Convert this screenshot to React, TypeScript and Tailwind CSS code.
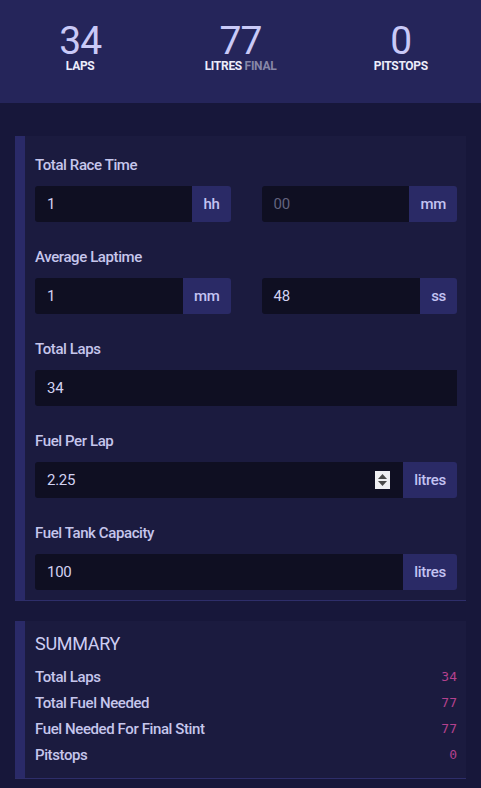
import React from 'react';

const font = { fontFamily: 'Roboto, "Noto Sans", sans-serif' };

const Stat = ({ value, label, extra }: { value: string; label: string; extra?: string }) => (
  <div className="flex flex-col items-center">
    <div className="text-[39px] leading-[36px] font-normal tracking-[-1px] text-[#c9c9f7]">{value}</div>
    <div className="text-[12px] leading-[14px] font-bold uppercase text-[#ececfa] tracking-[-0.3px]">
      {label}
      {extra && <span className="font-bold text-[#8787a8]"> {extra}</span>}
    </div>
  </div>
);

const Field = ({
  value,
  placeholder,
  unit,
  spinner,
}: {
  value?: string;
  placeholder?: string;
  unit?: string;
  spinner?: boolean;
}) => (
  <div className="flex h-[36px]">
    <div className="flex flex-1 items-center rounded-l-[3px] bg-[#0f0f22] pl-[12px] pr-[13px] text-[15px] tracking-[-0.3px]">
      {value ? (
        <span className="text-[#d2d2f2]">{value}</span>
      ) : (
        <span className="text-[#63637f]">{placeholder}</span>
      )}
      {spinner && (
        <span className="ml-auto flex h-[18px] w-[15px] flex-col items-center justify-center gap-[2px] bg-[#efeff2]">
          <svg width="9" height="5" viewBox="0 0 9 5">
            <path d="M0 5 L4.5 0 L9 5 Z" fill="#4a4a4a" />
          </svg>
          <svg width="9" height="5" viewBox="0 0 9 5">
            <path d="M0 0 L4.5 5 L9 0 Z" fill="#4a4a4a" />
          </svg>
        </span>
      )}
    </div>
    {unit && (
      <div className="flex items-center rounded-r-[3px] bg-[#2a2a66] px-[11px] text-[15px] font-medium tracking-[-0.3px] text-[#c3c3f2]">
        {unit}
      </div>
    )}
  </div>
);

const Label = ({ children }: { children: React.ReactNode }) => (
  <div className="mb-[10px] text-[15px] leading-[21px] font-medium tracking-[-0.4px] text-[#c6c6ec]">{children}</div>
);

const Card = ({ children, className }: { children: React.ReactNode; className?: string }) => (
  <div className={`mx-[15px] flex border-b border-[#2e2e6a] bg-[#1b1b3f] ${className ?? ''}`}>
    <div className="w-[10px] bg-[#2a2a68]" />
    <div className="flex-1 pl-[10px] pr-[9px]">{children}</div>
  </div>
);

const rows = [
  ['Total Laps', '34'],
  ['Total Fuel Needed', '77'],
  ['Fuel Needed For Final Stint', '77'],
  ['Pitstops', '0'],
];

export default function App() {
  return (
    <div className="min-h-[788px] bg-[#17173a] pb-[10px]" style={font}>
      <header className="grid h-[103px] grid-cols-3 bg-[#25255a] pt-[23px]">
        <Stat value="34" label="Laps" />
        <Stat value="77" label="Litres" extra="Final" />
        <Stat value="0" label="Pitstops" />
      </header>

      <Card className="mt-[33px]">
        <div className="pt-[19px] pb-[10px]">
          <Label>Total Race Time</Label>
          <div className="grid grid-cols-2 gap-[31px]">
            <Field value="1" unit="hh" />
            <Field placeholder="00" unit="mm" />
          </div>

          <div className="mt-[25px]">
            <Label>Average Laptime</Label>
            <div className="grid grid-cols-2 gap-[31px]">
              <Field value="1" unit="mm" />
              <Field value="48" unit="ss" />
            </div>
          </div>

          <div className="mt-[25px]">
            <Label>Total Laps</Label>
            <Field value="34" />
          </div>

          <div className="mt-[25px]">
            <Label>Fuel Per Lap</Label>
            <Field value="2.25" unit="litres" spinner />
          </div>

          <div className="mt-[25px]">
            <Label>Fuel Tank Capacity</Label>
            <Field value="100" unit="litres" />
          </div>
        </div>
      </Card>

      <Card className="mt-[20px]">
        <div className="pt-[11px] pb-[10px]">
          <h2 className="mb-[8px] text-[18px] leading-[24px] uppercase tracking-[-0.3px] text-[#cdcdf2]">Summary</h2>
          {rows.map(([k, v]) => (
            <div key={k} className="flex h-[26px] items-center justify-between">
              <span className="text-[15px] font-medium tracking-[-0.4px] text-[#c6c6ec]">{k}</span>
              <span className="text-[13px] text-[#b4418e]" style={{ fontFamily: '"DejaVu Sans Mono", monospace' }}>
                {v}
              </span>
            </div>
          ))}
        </div>
      </Card>
    </div>
  );
}
